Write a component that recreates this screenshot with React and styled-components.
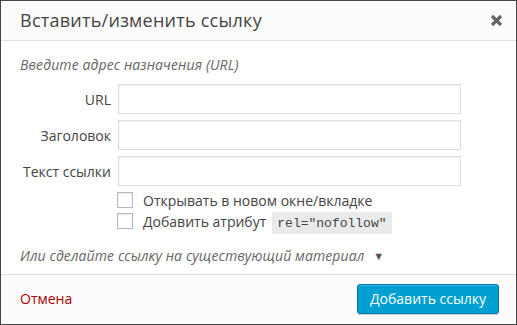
import styled, { createGlobalStyle } from 'styled-components'

const Global = createGlobalStyle`
	html, body {
		margin: 0;
		padding: 0;
		background: #fff;
	}
	body {
		font-family: "Open Sans", "Noto Sans", sans-serif;
		color: #444;
	}
`

function CloseIcon() {
	return (
		<svg width="13" height="13" viewBox="0 0 13 13">
			<path d="M2 2 L11 11 M11 2 L2 11" stroke="#666" strokeWidth="3.2" />
		</svg>
	)
}

function Field({ label }) {
	return (
		<Row>
			<Label>{label}</Label>
			<Input type="text" />
		</Row>
	)
}

function App() {
	return (
		<>
			<Global />
			<Dialog>
				<Header>
					<Title>Вставить/изменить ссылку</Title>
					<Close>
						<CloseIcon />
					</Close>
				</Header>
				<Body>
					<Hint>Введите адрес назначения (URL)</Hint>
					<Fields>
						<Field label="URL" />
						<Field label="Заголовок" />
						<Field label="Текст ссылки" />
					</Fields>
					<Checks>
						<Check>
							<Box />
							<CheckText>Открывать в новом окне/вкладке</CheckText>
						</Check>
						<Check>
							<Box />
							<CheckText>Добавить атрибут</CheckText>
							<Code>rel="nofollow"</Code>
						</Check>
					</Checks>
					<Toggle>
						Или сделайте ссылку на существующий материал
						<Arrow>▼</Arrow>
					</Toggle>
				</Body>
				<Footer>
					<Cancel>Отмена</Cancel>
					<Primary>Добавить ссылку</Primary>
				</Footer>
			</Dialog>
		</>
	)
}
export default App

const Dialog = styled.div`
	width: 517px;
	height: 325px;
	box-sizing: border-box;
	border: 1px solid #444;
	display: flex;
	flex-direction: column;
	background: #fff;
`

const Header = styled.div`
	height: 39px;
	flex: none;
	background: #fcfcfc;
	border-bottom: 1px solid #dfdfdf;
	display: flex;
	align-items: center;
	justify-content: space-between;
	padding: 0 13px 0 19px;
`

const Title = styled.div`
	font-size: 18px;
	line-height: 24px;
	letter-spacing: 0.25px;
	color: #444;
	margin-top: -1px;
`

const Close = styled.div`
	display: flex;
	align-items: center;
	justify-content: center;
	width: 14px;
	height: 14px;
	margin-top: -1px;
`

const Body = styled.div`
	flex: 1;
	padding: 14px 0 0 19px;
	display: flex;
	flex-direction: column;
`

const Hint = styled.div`
	font-style: italic;
	font-size: 14px;
	line-height: 20px;
	letter-spacing: 0.1px;
	color: #666;
`

const Fields = styled.div`
	display: flex;
	flex-direction: column;
	gap: 6px;
	margin-top: 9px;
`

const Row = styled.div`
	display: flex;
	align-items: center;
	gap: 7px;
`

const Label = styled.span`
	width: 91px;
	text-align: right;
	font-size: 14px;
	color: #444;
`

const Input = styled.input`
	width: 343px;
	height: 30px;
	box-sizing: border-box;
	border: 1px solid #ddd;
	box-shadow: inset 0 1px 2px rgba(0, 0, 0, 0.07);
	background: #fff;
	margin: 0;
	padding: 3px 5px;
	outline: none;
`

const Checks = styled.div`
	display: flex;
	flex-direction: column;
	gap: 3px;
	margin: 5px 0 0 97px;
`

const Check = styled.div`
	display: flex;
	align-items: center;
	height: 18px;
	font-size: 14px;
	color: #444;
`

const Box = styled.div`
	width: 16px;
	height: 16px;
	box-sizing: border-box;
	border: 1px solid #b4b9be;
	box-shadow: inset 0 1px 2px rgba(0, 0, 0, 0.1);
	background: #fff;
	flex: none;
`

const CheckText = styled.span`
	margin-left: 10px;
`

const Code = styled.code`
	margin-left: 6px;
	padding: 3px 5px 2px;
	font-family: "Liberation Mono", "DejaVu Sans Mono", monospace;
	font-size: 13px;
	line-height: 17px;
	background: #eaeaea;
	color: #444;
	position: relative;
	top: 2px;
`

const Toggle = styled.div`
	margin-top: 16px;
	font-style: italic;
	font-size: 14px;
	line-height: 20px;
	letter-spacing: 0.1px;
	color: #666;
	display: flex;
	align-items: center;
`

const Arrow = styled.span`
	font-style: normal;
	font-size: 11px;
	margin-left: 9px;
	color: #555;
`

const Footer = styled.div`
	height: 49px;
	flex: none;
	background: #fcfcfc;
	border-top: 1px solid #dfdfdf;
	display: flex;
	align-items: center;
	justify-content: space-between;
	padding: 0 17px 0 19px;
`

const Cancel = styled.span`
	font-size: 14px;
	color: #a00;
	margin-top: -2px;
`

const Primary = styled.button`
	height: 30px;
	width: 142px;
	box-sizing: border-box;
	border: 1px solid #0073aa;
	border-radius: 3px;
	background: #00a0d2;
	box-shadow: inset 0 1px 0 rgba(120, 200, 230, 0.5), 0 1px 0 rgba(0, 0, 0, 0.15);
	color: #fff;
	font-family: "Open Sans", sans-serif;
	font-size: 14px;
	padding: 0 10px 2px;
	margin-top: -1px;
`
